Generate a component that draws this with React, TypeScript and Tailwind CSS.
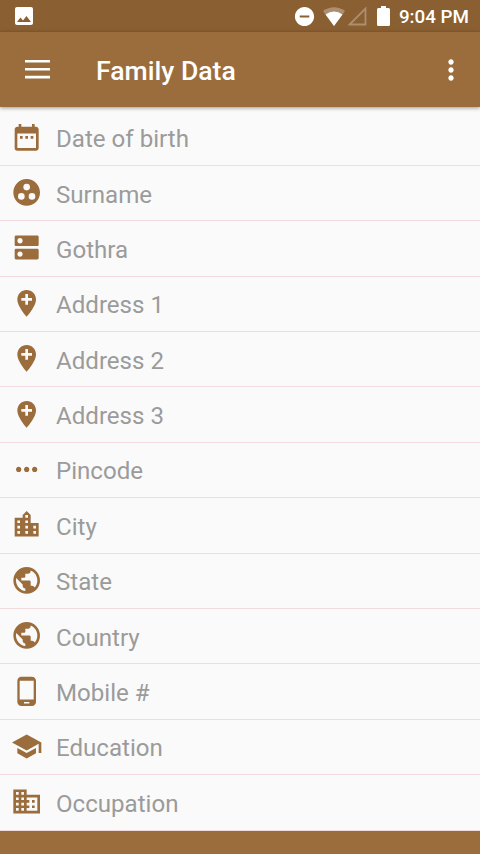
import type { IconType } from "react-icons";
import {
  MdAddLocation,
  MdBusiness,
  MdDateRange,
  MdDns,
  MdGroupWork,
  MdImage,
  MdLocationCity,
  MdMoreHoriz,
  MdMoreVert,
  MdPhoneAndroid,
  MdPublic,
  MdRemoveCircle,
  MdSchool,
} from "react-icons/md";

type Field = {
  label: string;
  icon: IconType;
};

const fields: Field[] = [
  { label: "Date of birth", icon: MdDateRange },
  { label: "Surname", icon: MdGroupWork },
  { label: "Gothra", icon: MdDns },
  { label: "Address 1", icon: MdAddLocation },
  { label: "Address 2", icon: MdAddLocation },
  { label: "Address 3", icon: MdAddLocation },
  { label: "Pincode", icon: MdMoreHoriz },
  { label: "City", icon: MdLocationCity },
  { label: "State", icon: MdPublic },
  { label: "Country", icon: MdPublic },
  { label: "Mobile #", icon: MdPhoneAndroid },
  { label: "Education", icon: MdSchool },
  { label: "Occupation", icon: MdBusiness },
];

function StatusBar() {
  return (
    <div className="flex h-8 items-center bg-[#8a5f32] pr-[11px] pl-3 text-white">
      <MdImage className="h-6 w-6" />
      <div className="ml-auto flex items-center">
        <MdRemoveCircle className="mr-[7px] h-[23px] w-[23px]" />
        <svg className="mr-[3px] h-[19px] w-[22px]" viewBox="0 0 22 19">
          <path d="M0 4Q11-3.5 22 4L11 19Z" fill="#fff" fillOpacity=".3" />
          <path d="M2.5 7.5Q11 1.5 19.5 7.5L11 19Z" fill="#fff" />
        </svg>
        <svg className="mr-[10px] h-[19px] w-[19px]" viewBox="0 0 19 19">
          <path d="M17.5 1.5v16h-16Z" fill="none" stroke="#fff" strokeOpacity=".3" strokeWidth="1.8" />
        </svg>
        <svg className="mr-[9px] h-5 w-[13px]" viewBox="0 0 13 20">
          <path d="M4 0h5v2h2.5q1.5 0 1.5 1.5v15q0 1.5-1.5 1.5h-10Q0 20 0 18.5v-15Q0 2 1.5 2H4Z" fill="#fff" />
        </svg>
        <span className="pt-[2px] text-[18.8px] font-medium">9:04 PM</span>
      </div>
    </div>
  );
}

function AppBar() {
  return (
    <header className="relative flex h-[75px] items-center bg-[#9b6d3c] pr-[13px] pl-[25px] text-white shadow-[0_1px_4px_rgba(0,0,0,0.4)]">
      <svg className="h-[19px] w-[25px]" viewBox="0 0 25 19" fill="currentColor">
        <path d="M0 0h25v2.6H0zM0 8h25v2.6H0zM0 15.8h25v2.6H0z" />
      </svg>
      <h1 className="ml-[46px] pt-[2px] text-[26.6px] font-medium">Family Data</h1>
      <MdMoreVert className="ml-auto h-8 w-8" />
    </header>
  );
}

function FieldRow({ label, icon: Icon }: Field) {
  return (
    <li className="flex h-[55.4px] items-center border-b border-[#f3dbe0] pl-[11px]">
      <Icon className="h-8 w-8 -translate-x-[0.33px] -translate-y-[0.6px] text-[#9b6d3c]" />
      <span className="ml-[13px] pt-[3px] text-[24.1px] text-[#9b9b9b]">{label}</span>
    </li>
  );
}

export default function App() {
  return (
    <div className="flex h-[854px] w-[480px] flex-col overflow-hidden bg-[#fafafa] font-['Roboto',sans-serif]">
      <StatusBar />
      <AppBar />
      <ul className="h-[723.5px] pt-[3.5px]">
        {fields.map((field) => (
          <FieldRow key={field.label} {...field} />
        ))}
      </ul>
      <footer className="flex-1 bg-[#9b6d3c]" />
    </div>
  );
}
